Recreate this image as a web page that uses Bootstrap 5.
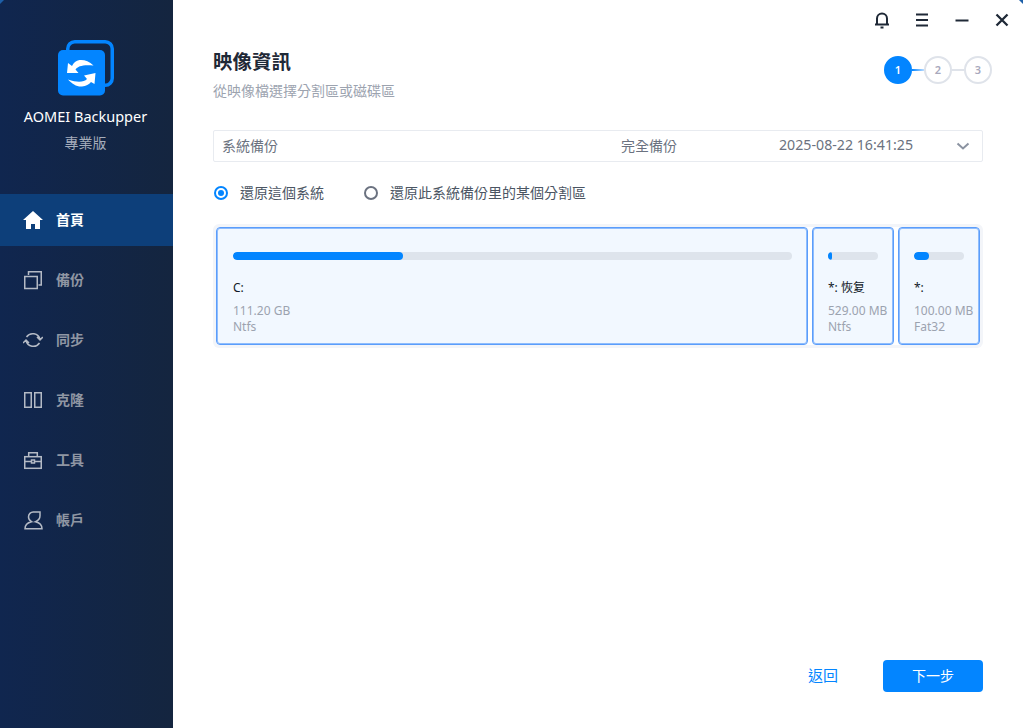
<!DOCTYPE html>
<html lang="zh-Hant">
<head>
<meta charset="utf-8">
<title>AOMEI Backupper</title>
<link href="https://cdn.jsdelivr.net/npm/bootstrap@5.3.0/dist/css/bootstrap.min.css" rel="stylesheet">
<style>
html,body{height:100%;margin:0;overflow:hidden;background:#fff}
body{font-family:"Noto Sans","Noto Sans CJK TC",sans-serif;font-size:14px;color:#4b5563}
.app-win{width:1023px;height:728px;position:relative}
.app-win::before,.app-win::after{content:"";position:absolute;top:0;width:0;height:0;border-top:4px solid #1d5fa8}
.app-win::before{left:0;border-right:4px solid transparent}
.app-win::after{right:0;border-left:4px solid transparent}
.side{width:173px;background:linear-gradient(90deg,#10264f,#14253f);flex:none}
.brand{padding-top:40px;padding-right:2px;height:194px}
.brand-name{font-size:14.5px;color:#fff;line-height:20px;margin-top:10px}
.brand-ed{font-size:14px;color:#a5adbb;line-height:20px;margin-top:7px}
.menu-item{height:52px;padding-left:23px;gap:13px;margin-bottom:8px;color:#8f96a3;font-size:14px;font-weight:700}
.menu-item.on{background:#0d3f7a;color:#fff}
.menu-item svg{width:20px;height:20px;flex:none}
.menu-item span{padding-bottom:2px}
.main-pane{min-width:0;padding:0 40px 36px 40px}
.top-ctl{height:40px;margin-right:-28px;gap:22px}
.top-ctl svg{width:18px;height:18px}
.page-title{font-size:19.5px;font-weight:700;color:#1f2937;line-height:24px;margin:10px 0 0}
.page-sub{font-size:14px;color:#9ca3af;line-height:18px;margin-top:8px}
.stepper{margin-top:16px;margin-right:-9px}
.dot{width:28px;height:28px;border-radius:50%;border:2px solid #dfe3ea;color:#a8a8bc;font-size:11px;font-weight:600}
.dot.on{background:#0385ff;border-color:#0385ff;color:#fff}
.dash{width:12px;height:2px;background:#dfe3ea}
.dash.on{background:linear-gradient(90deg,#0385ff,#bcdcff)}
.sel-box{height:32px;border:1px solid #e8ebf0;border-radius:2px;margin-top:30px;padding:0 12px 0 8px;color:#6b7280}
.sel-box span{padding-bottom:2px}
.sel-a{width:399px}
.sel-b{width:158px}
.sel-c{font-size:14.2px;width:165px}
.radios{margin-top:21px;gap:40px;height:20px;color:#4b5563;padding-left:1px}
.radio-o{width:14px;height:14px;border-radius:50%;border:2px solid #6b7280;background:#fff;flex:none}
.radio-o.on{border-color:#0385ff;position:relative}
.radio-o.on::after{content:"";position:absolute;inset:2px;background:#0385ff;border-radius:50%}
.radio-t{gap:12px}
.radio-l{padding-bottom:2px}
.disk-strip{margin:24px 3px 0;gap:4px;box-shadow:0 0 0 3px #f3f5f9;border-radius:3px}
.disk{height:118px;background:#f2f8ff;border:1px solid #5b9dfb;border-radius:4px;padding:24px 15px 0 16px;min-width:0;box-shadow:inset 0 0 0 1px #8fbdfd}
.d-c{width:592px}
.d-s{width:82px;padding-left:15px}
.bar{height:8px;background:#dee4ec;border-radius:4px}
.bar .progress-bar{background:#0385ff;border-radius:4px}
.disk-name{color:#111827;font-size:12px;line-height:16px;margin-top:20px}
.disk-meta{color:#9ca3af;font-size:12px;line-height:16px;margin-top:7px;white-space:nowrap}
.back-link{color:#0385ff;font-size:15px;text-decoration:none;margin-right:45px;padding-bottom:2px}
.next-btn{width:100px;height:32px;background:#0385ff;border:0;border-radius:4px;font-size:14px;padding:0 0 2px}
.foot-row{margin-top:auto}
</style>
</head>
<body>
<div class="app-win d-flex">
  <aside class="side d-flex flex-column">
    <div class="brand text-center">
      <svg width="56" height="56" viewBox="0 0 56 56" class="d-block mx-auto" aria-hidden="true">
        <rect x="9.750" y="1.750" width="44.500" height="43.500" rx="7" fill="none" stroke="#0385ff" stroke-width="3.500"/>
        <rect x="0" y="10" width="47" height="45.500" rx="5" fill="#0385ff"/>
        <path d="M10 23L9 33H20.500L17.500 29.500C20 26 25 24.500 35.500 25.500C31 21 26 19.500 21.500 20C18 20.500 15.500 23 14 26Z" fill="#fff"/>
        <path d="M37.500 33L26 35.500L29 39C26 42 20 43 10 39.500C14 44 19 47 24 46.500C28 46 31 44.500 33 42L36.500 44Z" fill="#fff"/>
      </svg>
      <div class="brand-name">AOMEI Backupper</div>
      <div class="brand-ed">專業版</div>
    </div>
    <nav class="d-flex flex-column">
      <div class="menu-item on d-flex align-items-center">
        <svg viewBox="0 0 20 20"><path d="M10 1L0 10h3v9h5v-5h4v5h5v-9h3z" fill="#fff"/></svg><span>首頁</span>
      </div>
      <div class="menu-item d-flex align-items-center">
        <svg viewBox="0 0 20 20" fill="none" stroke="#b4bac5" stroke-width="1.500"><rect x="1.750" y="6.500" width="12.500" height="12"/><path d="M5.500 5V1.750H18.250V15H15.500"/></svg><span>備份</span>
      </div>
      <div class="menu-item d-flex align-items-center">
        <svg viewBox="0 0 20 20" fill="none" stroke="#b4bac5" stroke-width="1.500"><path d="M3.500 7A7.500 7.500 0 0 1 17 9.500M14 7l3 3 2.800-3M16.500 13A7.500 7.500 0 0 1 3 10.500M0 13l3-3 3 3"/></svg><span>同步</span>
      </div>
      <div class="menu-item d-flex align-items-center">
        <svg viewBox="0 0 20 20" fill="none" stroke="#b4bac5" stroke-width="1.500"><rect x="1.750" y="2.750" width="6.500" height="14.500"/><rect x="11.750" y="2.750" width="6.500" height="14.500"/></svg><span>克隆</span>
      </div>
      <div class="menu-item d-flex align-items-center">
        <svg viewBox="0 0 20 20" fill="none" stroke="#b4bac5" stroke-width="1.500"><rect x="1.750" y="6.700" width="16.500" height="11.600"/><path d="M5.700 6.700V2.700h8.600v4M1.750 11.500h6.500M11.750 11.500h6.500"/><rect x="8.500" y="10" width="3" height="3"/></svg><span>工具</span>
      </div>
      <div class="menu-item d-flex align-items-center">
        <svg viewBox="0 0 20 20" fill="none" stroke="#b4bac5" stroke-width="1.500"><path d="M17 2H10.500a4.800 4.800 0 0 0-5 5c0 2 1 3.500 3 4.700C5 12.500 2 15 2 18.700h17c0-3.700-3-6.200-6.500-7 2.800-1.200 4.500-3.500 4.500-6z"/></svg><span>帳戶</span>
      </div>
    </nav>
  </aside>
  <main class="main-pane flex-grow-1 d-flex flex-column">
    <div class="top-ctl d-flex justify-content-end align-items-center">
      <svg viewBox="0 0 18 18" fill="none" stroke="#1f2937" stroke-width="2"><path d="M2 13.500h14M4 13.500V7.500a5 5 0 0 1 10 0v6"/><path d="M7.500 16.500h3"/></svg>
      <svg viewBox="0 0 18 18" fill="none" stroke="#1f2937" stroke-width="2"><path d="M3 3.500h12M3 9h12M3 14.500h12"/></svg>
      <svg viewBox="0 0 18 18" fill="none" stroke="#1f2937" stroke-width="2"><path d="M2.500 9.500h13"/></svg>
      <svg viewBox="0 0 18 18" fill="none" stroke="#1f2937" stroke-width="2.300"><path d="M3.500 3.500l11 11M14.500 3.500l-11 11"/></svg>
    </div>
    <div class="d-flex justify-content-between">
      <div>
        <h1 class="page-title">映像資訊</h1>
        <div class="page-sub">從映像檔選擇分割區或磁碟區</div>
      </div>
      <div class="stepper d-flex align-items-center align-self-start">
        <div class="dot on d-flex align-items-center justify-content-center">1</div><div class="dash on"></div>
        <div class="dot d-flex align-items-center justify-content-center">2</div><div class="dash"></div>
        <div class="dot d-flex align-items-center justify-content-center">3</div>
      </div>
    </div>
    <div class="sel-box d-flex align-items-center">
      <span class="sel-a">系統備份</span><span class="sel-b">完全備份</span><span class="sel-c">2025-08-22 16:41:25</span>
      <svg class="ms-auto" width="14" height="14" viewBox="0 0 14 14" fill="none" stroke="#8b93a1" stroke-width="2"><path d="M1.500 4.500L7 9.500l5.500-5"/></svg>
    </div>
    <div class="radios d-flex align-items-center">
      <div class="radio-t d-flex align-items-center"><span class="radio-o on"></span><span class="radio-l">還原這個系統</span></div>
      <div class="radio-t d-flex align-items-center"><span class="radio-o"></span><span class="radio-l">還原此系統備份里的某個分割區</span></div>
    </div>
    <div class="disk-strip d-flex">
      <div class="disk d-c">
        <div class="bar progress"><div class="progress-bar" style="width:30.400%"></div></div>
        <div class="disk-name">C:</div>
        <div class="disk-meta">111.20 GB<br>Ntfs</div>
      </div>
      <div class="disk d-s">
        <div class="bar progress"><div class="progress-bar" style="width:8%"></div></div>
        <div class="disk-name">*: 恢复</div>
        <div class="disk-meta">529.00 MB<br>Ntfs</div>
      </div>
      <div class="disk d-s">
        <div class="bar progress"><div class="progress-bar" style="width:30%"></div></div>
        <div class="disk-name">*:</div>
        <div class="disk-meta">100.00 MB<br>Fat32</div>
      </div>
    </div>
    <div class="foot-row d-flex justify-content-end align-items-center">
      <a href="#" class="back-link">返回</a>
      <button class="btn btn-primary next-btn" type="button">下一步</button>
    </div>
  </main>
</div>
</body>
</html>
